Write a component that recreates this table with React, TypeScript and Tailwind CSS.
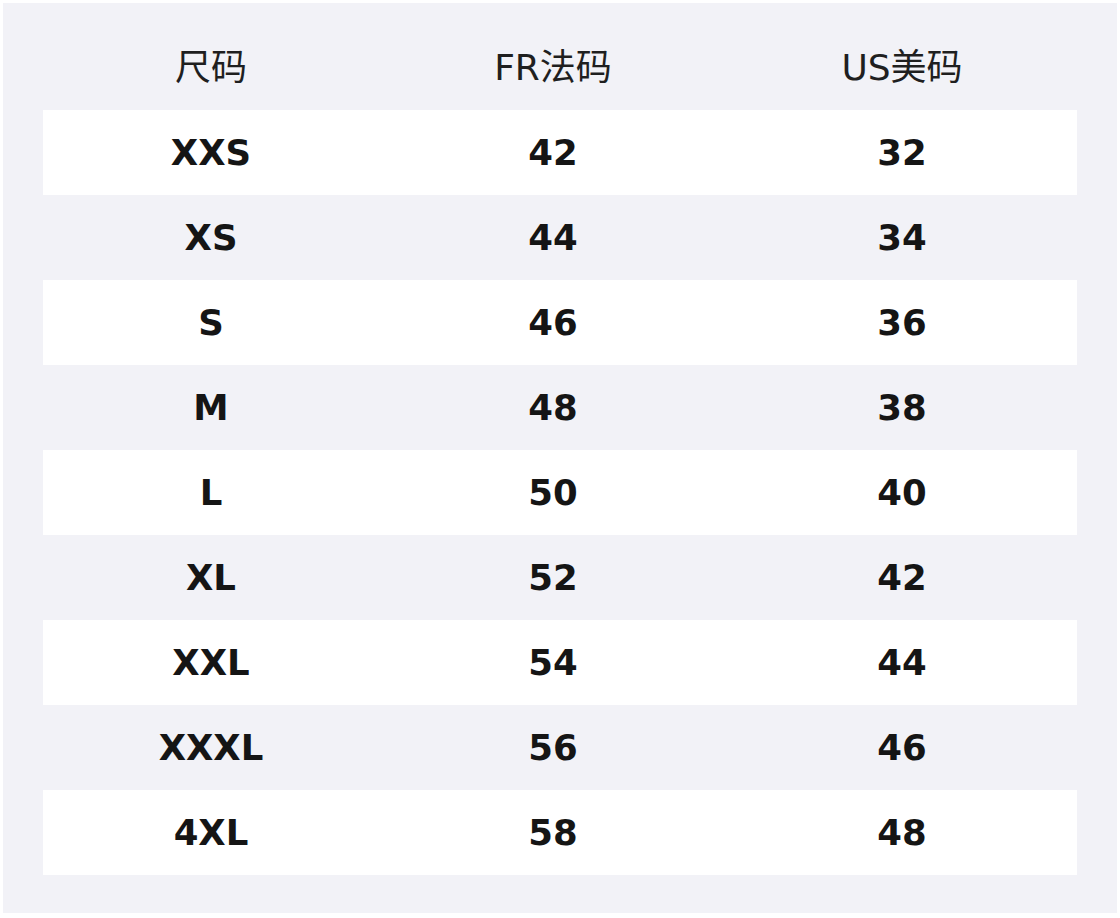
import React from "react";

const rows: [string, string, string][] = [
  ["XXS", "42", "32"],
  ["XS", "44", "34"],
  ["S", "46", "36"],
  ["M", "48", "38"],
  ["L", "50", "40"],
  ["XL", "52", "42"],
  ["XXL", "54", "44"],
  ["XXXL", "56", "46"],
  ["4XL", "58", "48"],
];

export default function App() {
  return (
    <div
      className="w-[1120px] h-[918px] bg-white pt-[3px] pl-[3px] pr-[3px] pb-[5px]"
      style={{ fontFamily: '"DejaVu Sans", "Noto Sans CJK SC", sans-serif' }}
    >
      <div className="h-full bg-[#f2f2f7] px-[40px] pt-[22px]">
        <div className="grid grid-cols-[336px_348px_350px] h-[85px] items-center text-[36px] text-[#1f1f1f]">
          <div className="text-center">尺码</div>
          <div className="text-center">FR法码</div>
          <div className="text-center">US美码</div>
        </div>
        {rows.map((r, i) => (
          <div
            key={r[0]}
            className={
              "grid grid-cols-[336px_348px_350px] h-[85px] items-center text-[35.5px] font-bold text-[#151515] " +
              (i % 2 === 0 ? "bg-white" : "bg-transparent")
            }
          >
            <div className="text-center">{r[0]}</div>
            <div className="text-center">{r[1]}</div>
            <div className="text-center">{r[2]}</div>
          </div>
        ))}
      </div>
    </div>
  );
}
